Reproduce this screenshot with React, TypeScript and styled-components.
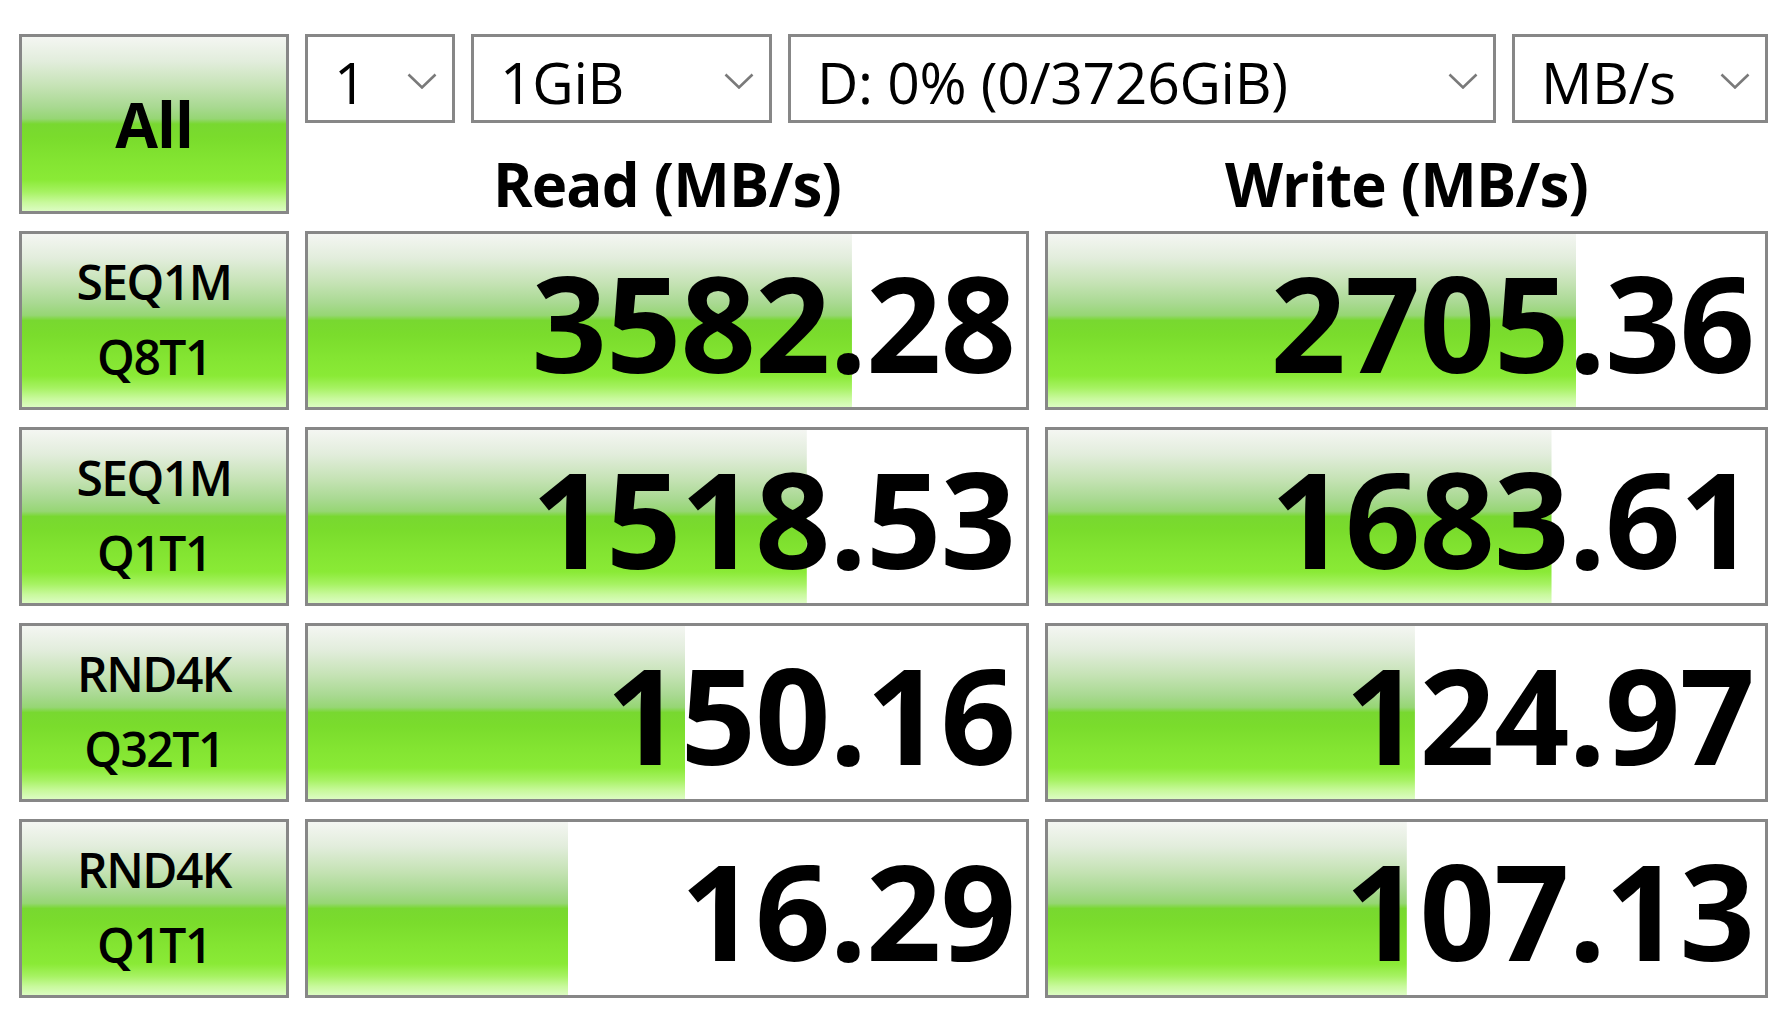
import styled, { createGlobalStyle } from "styled-components";

const GlobalStyle = createGlobalStyle`
  html, body {
    margin: 0;
    padding: 0;
    background: #ffffff;
  }
  body {
    font-family: "Open Sans", "Noto Sans", "Liberation Sans", sans-serif;
    color: #000;
  }
`;

const GREEN = `linear-gradient(
  to bottom,
  #f4f6f2 0%,
  #e2eddc 14%,
  #c6e3b6 28%,
  #a9d992 40%,
  #96d674 47%,
  #78d830 50%,
  #7adc2c 58%,
  #84e532 72%,
  #8aea36 82%,
  #a6f262 89%,
  #c8f99c 95%,
  #dcfcc2 100%
)`;

interface Result {
  name: string;
  sub: string;
  read: number;
  write: number;
}

const results: Result[] = [
  { name: "SEQ1M", sub: "Q8T1", read: 3582.28, write: 2705.36 },
  { name: "SEQ1M", sub: "Q1T1", read: 1518.53, write: 1683.61 },
  { name: "RND4K", sub: "Q32T1", read: 150.16, write: 124.97 },
  { name: "RND4K", sub: "Q1T1", read: 16.29, write: 107.13 },
];

const combos = [
  { label: "1", width: 150 },
  { label: "1GiB", width: 301 },
  { label: "D: 0% (0/3726GiB)", width: 708 },
  { label: "MB/s", width: 256 },
];

// bar length on a log scale, as the meter in the original does
const meter = (v: number) => Math.max(0, Math.min(100, (0.158 + 0.1687 * Math.log10(v)) * 100));

export default function App() {
  return (
    <>
      <GlobalStyle />
      <Page>
        <TopRow>
          <AllButton>All</AllButton>
          <TopRight>
            <ComboBar>
              {combos.map((c) => (
                <Combo key={c.label} $width={c.width}>
                  <span>{c.label}</span>
                  <Chevron viewBox="0 0 30 16">
                    <polyline points="1.5,1.5 15,14.5 28.5,1.5" />
                  </Chevron>
                </Combo>
              ))}
            </ComboBar>
            <Headers>
              <Header>Read (MB/s)</Header>
              <Header>Write (MB/s)</Header>
            </Headers>
          </TopRight>
        </TopRow>
        {results.map((r) => (
          <Row key={r.name + r.sub}>
            <TestButton>
              <span>{r.name}</span>
              <span>{r.sub}</span>
            </TestButton>
            <Score style={{ backgroundSize: `${meter(r.read)}% 100%` }}>
              {r.read.toFixed(2)}
            </Score>
            <Score style={{ backgroundSize: `${meter(r.write)}% 100%` }}>
              {r.write.toFixed(2)}
            </Score>
          </Row>
        ))}
      </Page>
    </>
  );
}

const Page = styled.div`
  display: flex;
  flex-direction: column;
  gap: 17px;
  padding: 34px 19px 0 19px;
  width: 1787px;
  box-sizing: border-box;
`;

const TopRow = styled.div`
  display: grid;
  grid-template-columns: 270px 1463px;
  column-gap: 16px;
  height: 180px;
`;

const Box = styled.div`
  box-sizing: border-box;
  border: 3px solid #878787;
`;

const GreenBox = styled(Box)`
  background: ${GREEN};
  display: flex;
  align-items: center;
  justify-content: center;
`;

const AllButton = styled(GreenBox)`
  font-size: 62px;
  font-weight: 700;
  letter-spacing: -1px;
  line-height: 1;
`;

const TopRight = styled.div`
  display: flex;
  flex-direction: column;
`;

const ComboBar = styled.div`
  display: flex;
  gap: 16px;
  height: 89px;
`;

const Combo = styled(Box)<{ $width: number }>`
  width: ${(p) => p.$width}px;
  height: 89px;
  background: #fff;
  display: flex;
  align-items: center;
  justify-content: space-between;
  padding: 8px 15px 0 26px;
  font-size: 57px;
  font-weight: 400;
  letter-spacing: -0.3px;
  line-height: 1;
  white-space: nowrap;
`;

const Chevron = styled.svg`
  width: 30px;
  height: 16px;
  margin-top: -3px;
  flex-shrink: 0;
  polyline {
    fill: none;
    stroke: #7a7a7a;
    stroke-width: 2.6;
  }
`;

const Headers = styled.div`
  display: grid;
  grid-template-columns: 724px 723px;
  column-gap: 16px;
  height: 91px;
`;

const Header = styled.div`
  display: flex;
  align-items: flex-end;
  justify-content: center;
  font-size: 60px;
  font-weight: 700;
  line-height: 60px;
  letter-spacing: -0.8px;
`;

const Row = styled.div`
  display: grid;
  grid-template-columns: 270px 724px 723px;
  column-gap: 16px;
  height: 179px;
`;

const TestButton = styled(GreenBox)`
  flex-direction: column;
  font-size: 48px;
  font-weight: 600;
  letter-spacing: -1.5px;
  line-height: 75px;
  padding-bottom: 4px;
`;

const Score = styled(Box)`
  background-color: #fff;
  background-image: ${GREEN};
  background-repeat: no-repeat;
  background-position: left top;
  display: flex;
  align-items: center;
  justify-content: flex-end;
  padding: 2px 11px 0 0;
  font-size: 132px;
  font-weight: 700;
  letter-spacing: -1px;
  line-height: 1;
`;
